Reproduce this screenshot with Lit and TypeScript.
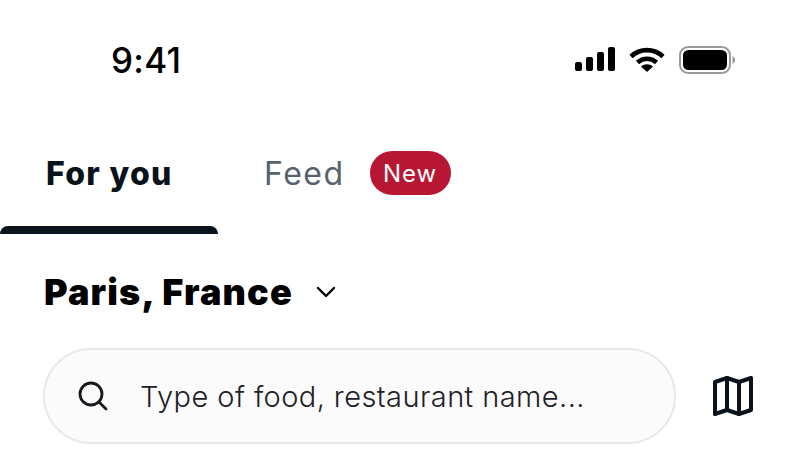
import { LitElement, html, css } from 'lit';
import { customElement } from 'lit/decorators.js';

@customElement('app-root')
export class AppRoot extends LitElement {
	static styles = css`
		:host {
			display: block;
			width: 800px;
			height: 450px;
			overflow: hidden;
			background: #fff;
			font-family: Inter, 'Open Sans', sans-serif;
		}
		svg {
			display: block;
			flex: none;
		}
		.status {
			height: 120px;
			display: flex;
			align-items: center;
			justify-content: space-between;
			padding: 0 65px 0 111px;
		}
		.time {
			font-size: 35px;
			font-weight: 500;
			color: #000;
			letter-spacing: 0.3px;
		}
		.status-icons {
			display: flex;
			align-items: center;
			gap: 14px;
		}
		.tabs {
			height: 114px;
			display: flex;
		}
		.tab {
			display: flex;
			align-items: center;
			height: 106px;
			font-size: 32px;
		}
		.tab-active {
			position: relative;
			width: 218px;
			height: 114px;
			padding: 0 0 8px 46px;
			box-sizing: border-box;
			font-weight: 800;
			letter-spacing: 1.3px;
			color: #0a121c;
		}
		.tab-active::after {
			content: '';
			position: absolute;
			left: 0;
			right: 0;
			bottom: 0;
			height: 8px;
			background: #0a121c;
			border-radius: 8px 8px 0 0;
		}
		.tab-feed {
			margin-left: 46px;
			font-weight: 400;
			letter-spacing: 1.5px;
			color: #56636f;
			gap: 25px;
		}
		.badge {
			width: 81px;
			height: 44px;
			border-radius: 22px;
			background: #b81733;
			color: #fff;
			font-size: 24px;
			font-weight: 400;
			letter-spacing: 1px;
			display: flex;
			align-items: center;
			justify-content: center;
		}
		.location {
			display: flex;
			align-items: center;
			gap: 23px;
			height: 115px;
			padding-left: 44px;
		}
		.location h1 {
			margin: 0;
			font-size: 36px;
			font-weight: 900;
			letter-spacing: 1.15px;
			color: #000;
		}
		.search-row {
			display: flex;
			align-items: center;
			padding-left: 43px;
			margin-top: -1px;
			gap: 37px;
		}
		.search {
			width: 633px;
			height: 96px;
			box-sizing: border-box;
			border: 2px solid #e8e8e8;
			border-radius: 48px;
			background: #fbfbfc;
			display: flex;
			align-items: center;
			padding-left: 33px;
			gap: 32px;
			font-size: 29px;
			font-weight: 300;
			letter-spacing: 0.42px;
			color: #1e2126;
		}
	`;

	render() {
		return html`
			<div class="status">
				<span class="time">9:41</span>
				<div class="status-icons">
					<svg width="40" height="26" viewBox="0 0 40 26" fill="#000">
						<rect x="0" y="15" width="7" height="9" rx="2"></rect>
						<rect x="11" y="10" width="7" height="14" rx="2"></rect>
						<rect x="22" y="5" width="7" height="19" rx="2"></rect>
						<rect x="33" y="0" width="7" height="24" rx="2"></rect>
					</svg>
					<svg width="36" height="26" viewBox="0 0 36 26" fill="none" stroke="#000" stroke-width="4.6">
						<path d="M2 9.5C11 1 25 1 34 9.5"></path>
						<path d="M8.5 15.5C14 10.5 22 10.5 27.5 15.5"></path>
						<path d="M12 19.5 L18 25 L24 19.5 C20.5 16.5 15.5 16.5 12 19.5Z" fill="#000" stroke="none"></path>
					</svg>
					<svg width="56" height="28" viewBox="0 0 56 28" fill="none">
						<rect x="1" y="1" width="50" height="26" rx="8" stroke="#9a9a9a" stroke-width="2"></rect>
						<rect x="4" y="4" width="44" height="20" rx="5.5" fill="#000"></rect>
						<path d="M53.5 10C55.5 10.8 56 12.5 56 14C56 15.5 55.5 17.2 53.5 18Z" fill="#9a9a9a"></path>
					</svg>
				</div>
			</div>
			<div class="tabs">
				<div class="tab tab-active">For you</div>
				<div class="tab tab-feed">Feed <span class="badge">New</span></div>
			</div>
			<div class="location">
				<h1>Paris, France</h1>
				<svg width="20" height="12" viewBox="0 0 20 12" fill="none" stroke="#000" stroke-width="2.4" stroke-linecap="round" stroke-linejoin="round">
					<path d="M2 2l8 8 8-8"></path>
				</svg>
			</div>
			<div class="search-row">
				<div class="search">
					<svg width="30" height="30" viewBox="0 0 30 30" fill="none" stroke="#15191e" stroke-width="2.8" stroke-linecap="round">
						<circle cx="13" cy="13" r="11"></circle>
						<path d="M21 21 L28 28"></path>
					</svg>
					<span>Type of food, restaurant name...</span>
				</div>
				<svg width="40" height="40" viewBox="0 0 40 40" fill="none" stroke="#0a121c" stroke-width="4" stroke-linejoin="round" stroke-linecap="round">
					<path d="M2 6 L14 2 L26 6 L38 2 V34 L26 38 L14 34 L2 38Z"></path>
					<path d="M14 2 V34 M26 6 V38"></path>
				</svg>
			</div>
		`;
	}
}
